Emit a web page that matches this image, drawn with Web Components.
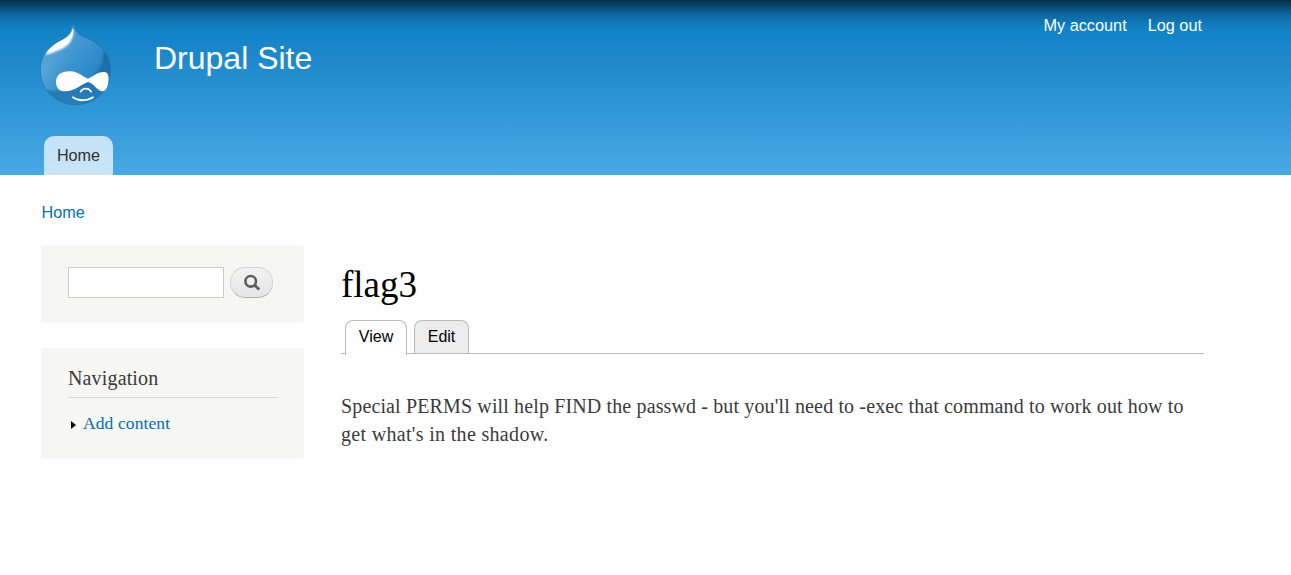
<!DOCTYPE html>
<html lang="en">
<head>
<meta charset="utf-8">
<title>flag3 | Drupal Site</title>
<style>
body { margin: 0; background: #fff; color: #3b3b3b; font-family: "Liberation Sans", Arial, sans-serif; }
</style>
</head>
<body>
<drupal-page></drupal-page>
<script>
const define = (name, html) => customElements.define(name, class extends HTMLElement {
  constructor() {
    super();
    const t = document.createElement('template');
    t.innerHTML = html;
    this.attachShadow({ mode: 'open' }).append(t.content.cloneNode(true));
  }
});

define('drop-logo', `
<style>:host{display:block;width:72px;height:81px} svg{display:block}</style>
<svg width="72" height="81" viewBox="30 30 216 243">
  <defs>
    <linearGradient id="b" x1="0" y1="0" x2="1" y2="1"><stop offset="0" stop-color="#2f86c4"/><stop offset=".3" stop-color="#4a9bd2"/><stop offset=".6" stop-color="#2e8ccb"/><stop offset="1" stop-color="#1f76b4"/></linearGradient>
    <linearGradient id="d" x1="0" y1="0" x2="0" y2="1"><stop offset="0" stop-color="#1a6ba6"/><stop offset="1" stop-color="#2a7fba"/></linearGradient>
    <linearGradient id="l" x1="0" y1="0" x2="1" y2=".2"><stop offset="0" stop-color="#8cc4e8" stop-opacity=".35"/><stop offset=".5" stop-color="#6fb3e0" stop-opacity="0"/></linearGradient>
    <filter id="s" x="-20%" y="-20%" width="140%" height="140%"><feGaussianBlur stdDeviation="2.5"/></filter>
    <clipPath id="c"><path d="M126 30H131C135 52 148 61 171 69C215 87 242 122 242 165C242 226 194 269 137 269C77 269 31 223 31 163C31 124 53 99 84 80C109 68 125 57 126 30Z"/></clipPath>
  </defs>
  <g clip-path="url(#c)">
    <rect x="30" y="30" width="216" height="243" fill="url(#b)"/>
    <rect x="30" y="30" width="216" height="243" fill="url(#l)"/>
    <path d="M219 112C223 164 180 201 128 220C94 230 62 227 30 224V275H246V112Z" fill="url(#d)" filter="url(#s)"/>
    <path d="M129 32C133 57 128 75 113 90C93 107 65 113 46 121C55 95 83 80 103 70C120 61 127 50 129 32Z" fill="#fff" filter="url(#s)"/>
    <path d="M129 36C132 57 125 71 109 84C90 100 68 107 49 116C60 94 84 81 106 70C120 62 127 51 129 36Z" fill="#fff"/>
  </g>
  <path d="M128 31C134 52 148 61 171 69C215 87 242 122 242 165C242 226 194 269 137 269C77 269 31 223 31 163C31 124 53 99 84 80C109 68 126 57 128 31Z" fill="none" stroke="#1b659d" stroke-opacity=".55" stroke-width="2.5"/>
  <path d="M78 201C78 178 97 168 121 169C145 170 158 185 174 191C190 184 203 169 224 171C237 173 237 190 235 202C233 216 227 229 218 229C202 229 193 205 174 201C151 209 137 228 105 229C87 230 78 216 78 201Z" fill="#fff"/>
  <path d="M152 230C158 218 177 218 183 230" fill="none" stroke="#fff" stroke-width="5.5" stroke-linecap="round"/>
  <path d="M129 247C144 259 173 258 189 247" fill="none" stroke="#fff" stroke-width="5.5" stroke-linecap="round"/>
</svg>`);

define('site-header', `
<style>
:host{display:flex;flex-direction:column;justify-content:space-between;height:175px;box-sizing:border-box;padding:0 87px 0 40px;color:#fff;
background:linear-gradient(rgba(0,0,0,.6),rgba(0,0,0,.42) 6px,rgba(0,0,0,.16) 15px,rgba(0,0,0,0) 28px),linear-gradient(#0779bf,#48a9e4)}
.top{display:flex;align-items:flex-start}
drop-logo{margin-top:25px}
h1{margin:38px 0 0 42px;font-weight:400;font-size:32px;line-height:40px}
nav{margin:15px 2px 0 auto;display:flex;gap:21px;font-size:16.3px;line-height:20px}
.tab{align-self:flex-start;margin-left:4px;width:69px;height:39px;line-height:39px;text-align:center;border-radius:10px 10px 0 0;background:rgba(255,255,255,.7);color:#333;font-size:16.2px}
</style>
<div class="top"><drop-logo></drop-logo><h1><slot></slot></h1><nav><slot name="user"></slot></nav></div>
<div class="tab"><slot name="tab"></slot></div>`);

define('side-block', `
<style>:host{display:block;box-sizing:border-box;width:263px;padding:0 26px;background:#f6f6f2;border:1px solid #f9f9f9}</style><slot></slot>`);

define('search-form', `
<style>
:host{display:flex;gap:6px;padding:21px 0 24px}
input{box-sizing:border-box;width:156px;height:31px;margin:0;border:1px solid #ccc;background:#fff;padding:0}
button{box-sizing:border-box;width:43px;height:31px;padding:0;display:grid;place-items:center;border:1px solid #d2d2d2;border-bottom-color:#b0b0b0;border-radius:15px;background:linear-gradient(#f2f2f2,#e6e6e6)}
svg{display:block}
</style>
<input type="text" aria-label="Search"><button aria-label="Search"><svg width="18" height="18" viewBox="0 0 18 18" fill="none" stroke="#5e5e5e"><circle cx="7.7" cy="7.3" r="5.3" stroke-width="2.6"/><path d="M11.4 11L16.2 15.6" stroke-width="2.8"/></svg></button>`);

define('nav-menu', `
<style>
:host{display:block;height:109px;font-family:"Liberation Serif",serif}
h2{margin:0;padding-top:17px;height:31px;line-height:25px;font-weight:400;font-size:20px;letter-spacing:.15px;border-bottom:1px solid #d6d6d6;width:210px}
.item{display:flex;align-items:center;margin-top:14px;height:22px;padding-left:2.5px;gap:7.5px;color:#0071b3;font-size:17.5px;letter-spacing:.1px}
svg{display:block;margin-top:4px}
</style>
<h2>Navigation</h2><div class="item"><svg width="5" height="8" viewBox="0 0 5 8"><path d="M0 0L5 4L0 8Z" fill="#000"/></svg><span>Add content</span></div>`);

define('page-tabs', `
<style>
:host{display:flex;align-items:flex-end;gap:7px;height:34px;padding-left:4px;box-sizing:border-box;border-bottom:1px solid #bbb;font-size:16px;color:#000}
div{box-sizing:border-box;height:33px;line-height:31px;text-align:center;border:1px solid #bbb;border-bottom:0;border-radius:8px 8px 0 0;width:55px;background:#ededed}
.on{width:62px;height:35px;margin-bottom:-2px;background:#fff;line-height:32px}
</style><div class="on">View</div><div>Edit</div>`);

define('node-article', `
<style>
:host{display:block;flex:1;font-family:"Liberation Serif",serif}
h1{margin:19px 0 15px;font-weight:400;font-size:37px;line-height:41px;color:#000;letter-spacing:0}
page-tabs{font-family:"Liberation Sans",Arial,sans-serif}
p{margin:38px 0 0;font-size:20px;line-height:28px;white-space:nowrap}
.a{letter-spacing:.133px}.b{letter-spacing:.32px}
</style>
<h1>flag3</h1><page-tabs></page-tabs>
<p><span class="a">Special PERMS will help FIND the passwd - but you'll need to -exec that command to work out how to</span><br><span class="b">get what's in the shadow.</span></p>`);

define('drupal-page', `
<style>
:host{display:block}
main{padding:0 87px 0 41px}
.crumb{padding:27px 0 0 .5px;height:43px;line-height:20px;font-size:16.2px;color:#0071b3}
.cols{display:flex;gap:37px;align-items:flex-start}
aside{display:grid;gap:25px}
</style>
<site-header>Drupal Site<span slot="user">My account</span><span slot="user">Log out</span><span slot="tab">Home</span></site-header>
<main><div class="crumb">Home</div><div class="cols"><aside><side-block><search-form></search-form></side-block><side-block><nav-menu></nav-menu></side-block></aside><node-article></node-article></div></main>`);
</script>
</body>
</html>
